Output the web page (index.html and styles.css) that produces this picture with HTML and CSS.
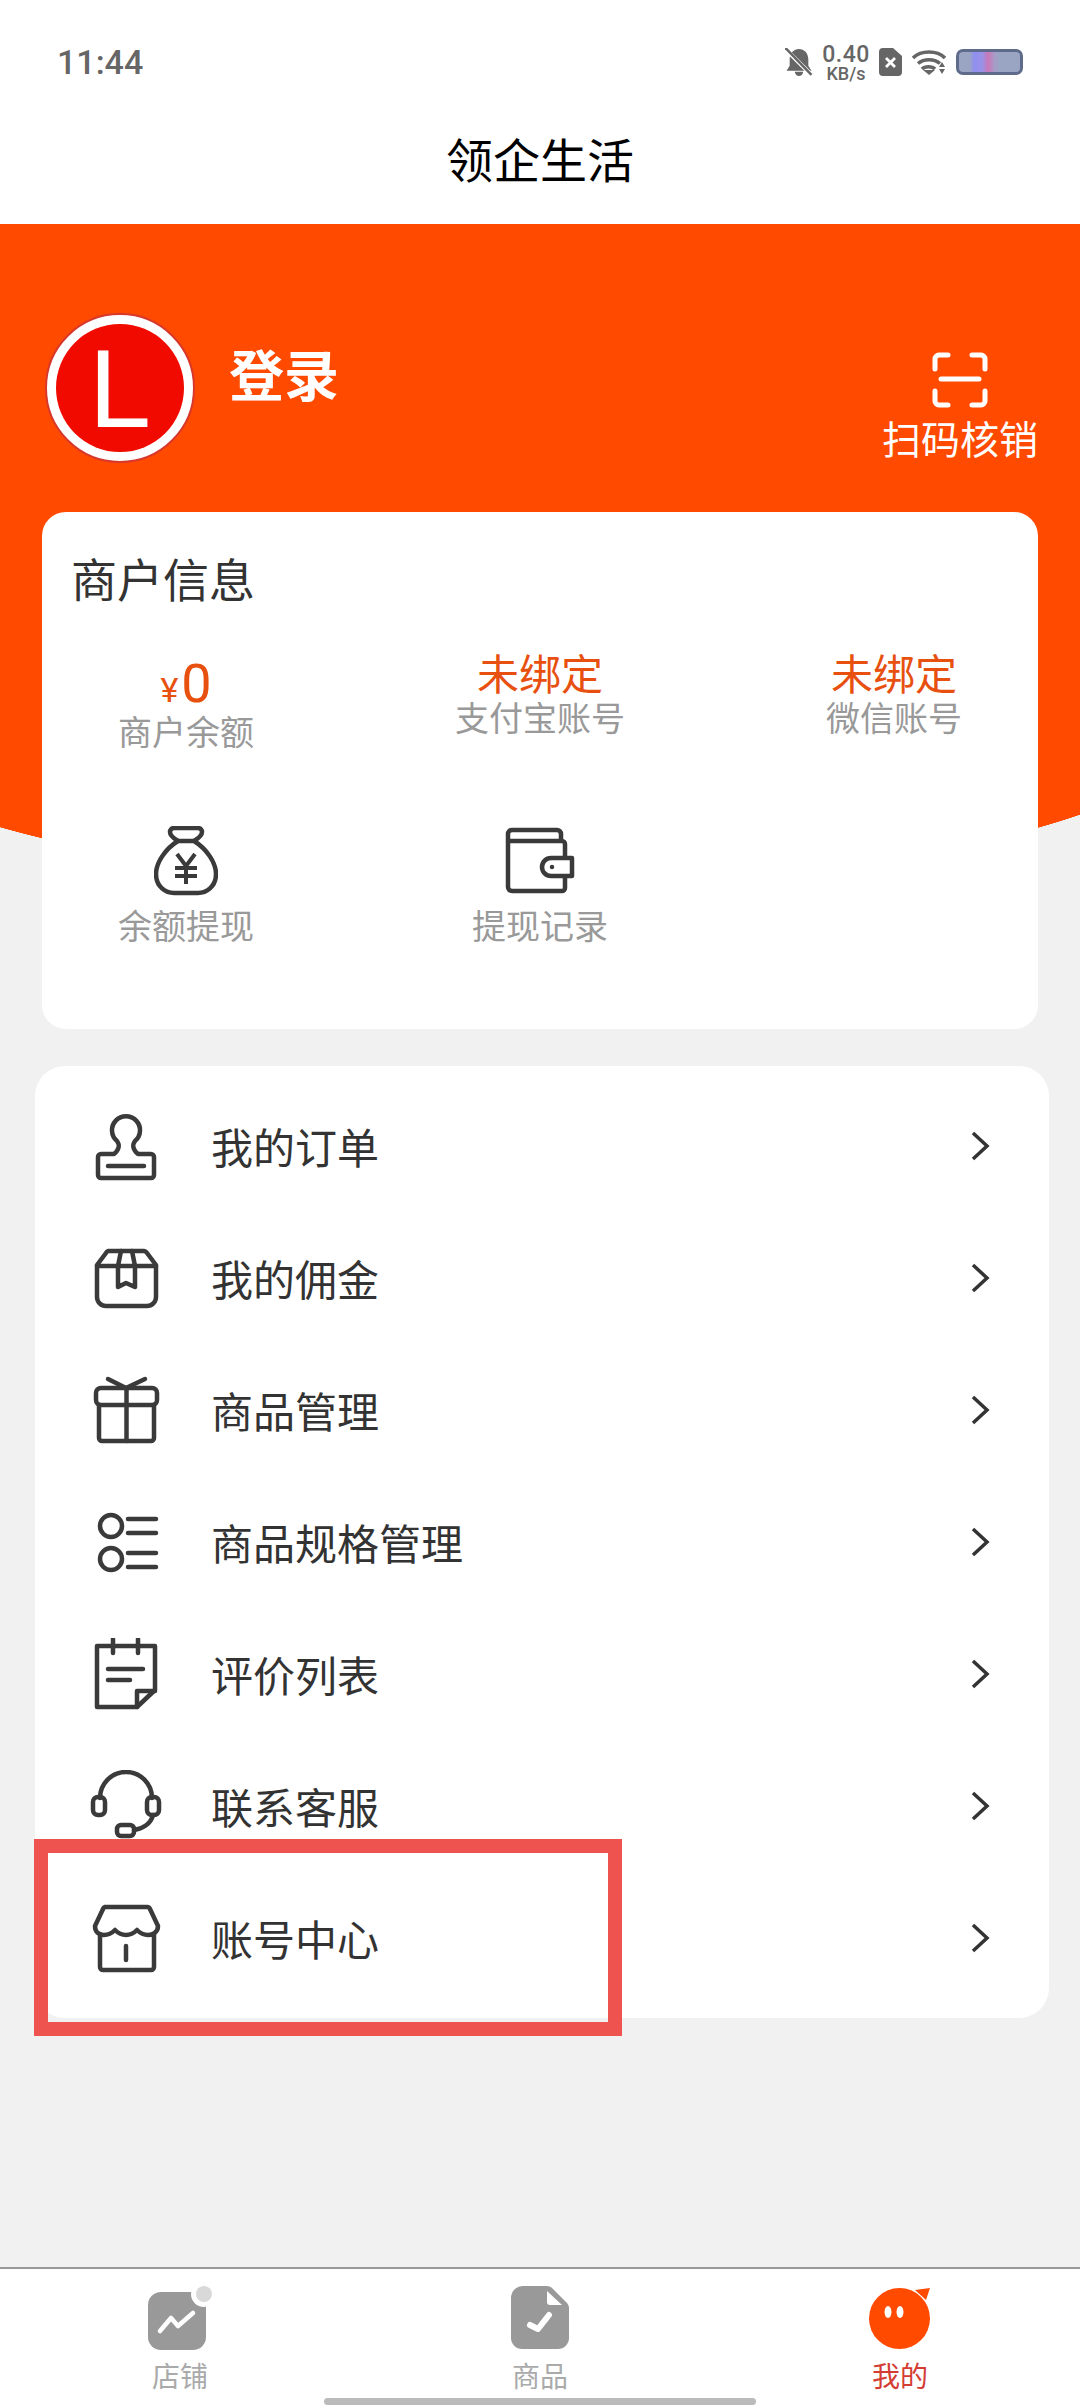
FILE: index.html
```html
<!DOCTYPE html>
<html lang="zh-CN">
<head>
    <meta charset="UTF-8">
    <meta name="viewport" content="width=device-width, initial-scale=1.0">
    <title>领企生活</title>
    <link rel="stylesheet" href="styles.css">
</head>
<body>
    <header class="top">
        <div class="status-bar">
            <span class="time">11:44</span>
            <div class="status-icons">
                <svg class="ic-bell" viewBox="0 0 26 27"><path d="M13 1c5 0 9 4 9 10v6l3 5H1l3-5v-6c0-6 4-10 9-10zM9 23h8a4 4 0 0 1-8 0z" fill="#666"/><path d="M0 1l26 26" stroke="#fff" stroke-width="4"/><path d="M0 0l25 26" stroke="#666" stroke-width="2.4"/></svg>
                <div class="speed"><span class="speed-num">0.40</span><span class="speed-unit">KB/s</span></div>
                <svg class="ic-sim" viewBox="0 0 23 28"><path d="M4 0h10l9 8v16a4 4 0 0 1-4 4H4a4 4 0 0 1-4-4V4a4 4 0 0 1 4-4z" fill="#666"/><path d="M7 10l9 9M16 10l-9 9" stroke="#fff" stroke-width="2.8"/></svg>
                <svg class="ic-wifi" viewBox="0 0 34 26" fill="none" stroke="#666" stroke-width="3.500"><path d="M1 9c8-8 24-8 32 0"/><path d="M6 14.500c6-5 16-5 22 0"/><path d="M10 20c3-3 10-3 13 0" /><path d="M11 21l6 5 6-5z" fill="#666" stroke="none"/><path d="M30 13l-3 5h6zM27 20h6l-3 5z" fill="#666" stroke="none"/></svg>
                <div class="battery"></div>
            </div>
        </div>
        <h1 class="page-title">领企生活</h1>
    </header>

    <main class="page">
        <section class="hero">
            <div class="user-row">
                <div class="avatar"><span class="avatar-in">L</span></div>
                <div class="login-name">登录</div>
                <div class="scan">
                    <svg class="ic-scan" viewBox="0 0 56 56" fill="none" stroke="#fff" stroke-width="5" stroke-linecap="round"><path d="M3 17V7a4 4 0 0 1 4-4h9"/><path d="M40 3h9a4 4 0 0 1 4 4v10"/><path d="M3 39v10a4 4 0 0 0 4 4h9"/><path d="M40 53h9a4 4 0 0 0 4-4V39"/><path d="M9 27h38"/></svg>
                    <span>扫码核销</span>
                </div>
            </div>

            <div class="merchant-card">
                <h2 class="card-title">商户信息</h2>
                <div class="stats">
                    <div class="stat">
                        <div class="amount"><small>¥</small>0</div>
                        <div class="stat-label amount-label">商户余额</div>
                    </div>
                    <div class="stat">
                        <div class="stat-value">未绑定</div>
                        <div class="stat-label">支付宝账号</div>
                    </div>
                    <div class="stat">
                        <div class="stat-value">未绑定</div>
                        <div class="stat-label">微信账号</div>
                    </div>
                    <div class="stat">
                        <svg class="ic-bag" viewBox="0 0 64 70" fill="none" stroke="#3a3a3a" stroke-width="4.5" stroke-linejoin="round"><path d="M24 15c-5-3-8-6-8-9a4 4 0 0 1 4-4h24a4 4 0 0 1 4 4c0 3-3 6-8 9"/><path d="M24 15C11 23 2 37 2 48c0 13 10 19 18 19h24c8 0 18-6 18-19 0-11-9-25-22-33z"/><path d="M23 28l9 12 9-12M21 42h22M21 50h22M32 40v18" stroke-width="4"/></svg>
                        <div class="stat-label action-label">余额提现</div>
                    </div>
                    <div class="stat">
                        <svg class="ic-wallet" viewBox="0 0 70 66" fill="none" stroke="#3a3a3a" stroke-width="4.5" stroke-linejoin="round"><path d="M56 13V6a4 4 0 0 0-4-4H7a4 4 0 0 0-4 4v53a4 4 0 0 0 4 4h50a3 3 0 0 0 3-3V48"/><path d="M60 30V16a3 3 0 0 0-3-3H3"/><path d="M67 30H46a9 9 0 0 0 0 18h21z"/><circle cx="47" cy="39" r="1.5" fill="#3a3a3a" stroke-width="1.5"/></svg>
                        <div class="stat-label action-label">提现记录</div>
                    </div>
                </div>
            </div>
        </section>

        <section class="menu-card">
            <ul class="menu">
                <li class="menu-row">
                    <svg class="menu-ic" viewBox="0 0 72 72"><path d="M27 31a14 14 0 1 1 18 0c-3 4-2 9 3 13h13a3 3 0 0 1 3 3v18a3 3 0 0 1-3 3H11a3 3 0 0 1-3-3V47a3 3 0 0 1 3-3h13c5-4 6-9 3-13z"/><path d="M18 56h36"/></svg>
                    <span class="menu-text">我的订单</span>
                    <svg class="chevron" viewBox="0 0 20 30"><path d="M3 2l14 13L3 28"/></svg>
                </li>
                <li class="menu-row">
                    <svg class="menu-ic" viewBox="0 0 72 72"><path d="M18 9h36a4 4 0 0 1 3 2l9 12v32a9 9 0 0 1-9 9H16a9 9 0 0 1-9-9V23l9-12a4 4 0 0 1 2-2z"/><path d="M7 24h59"/><path d="M31 9l-3 15v21l8-4 9 4V24l-3-15"/></svg>
                    <span class="menu-text">我的佣金</span>
                    <svg class="chevron" viewBox="0 0 20 30"><path d="M3 2l14 13L3 28"/></svg>
                </li>
                <li class="menu-row">
                    <svg class="menu-ic" viewBox="0 0 72 72"><path d="M11 14h51a5 5 0 0 1 5 5v7a5 5 0 0 1-5 5H11a5 5 0 0 1-5-5v-7a5 5 0 0 1 5-5z"/><path d="M9 31v33a3 3 0 0 0 3 3h49a3 3 0 0 0 3-3V31"/><path d="M36.500 14v53"/><path d="M18 5l18 9 19-9"/></svg>
                    <span class="menu-text">商品管理</span>
                    <svg class="chevron" viewBox="0 0 20 30"><path d="M3 2l14 13L3 28"/></svg>
                </li>
                <li class="menu-row">
                    <svg class="menu-ic" viewBox="0 0 72 72"><circle cx="21" cy="20" r="11"/><circle cx="21" cy="53" r="11"/><path d="M38 13h28M38 27h28M38 47h28M38 61h28"/></svg>
                    <span class="menu-text">商品规格管理</span>
                    <svg class="chevron" viewBox="0 0 20 30"><path d="M3 2l14 13L3 28"/></svg>
                </li>
                <li class="menu-row">
                    <svg class="menu-ic" viewBox="0 0 72 72"><path d="M7 8h58v44L47 69H7z"/><path d="M47 69V53h18"/><path d="M23 1v14M48 1v14M18 31h35M18 42h22"/></svg>
                    <span class="menu-text">评价列表</span>
                    <svg class="chevron" viewBox="0 0 20 30"><path d="M3 2l14 13L3 28"/></svg>
                </li>
                <li class="menu-row">
                    <svg class="menu-ic" viewBox="0 0 72 72"><path d="M10 28a26 26 0 0 1 52 0"/><rect x="3" y="27" width="12" height="18" rx="5"/><rect x="57" y="27" width="12" height="18" rx="5"/><path d="M63 45c-2 9-11 14-19 15"/><rect x="27" y="55" width="17" height="11" rx="4"/></svg>
                    <span class="menu-text">联系客服</span>
                    <svg class="chevron" viewBox="0 0 20 30"><path d="M3 2l14 13L3 28"/></svg>
                </li>
                <li class="menu-row">
                    <svg class="menu-ic" viewBox="0 0 72 72"><path d="M15 5h42a3 3 0 0 1 3 2l8 17c0 6-5 9-10 9s-8-2-11-5c-3 3-6 5-11 5s-8-2-11-5c-3 3-6 5-11 5-5 0-9-3-9-9l8-17a3 3 0 0 1 2-2z"/><path d="M10 32v33a3 3 0 0 0 3 3h48a3 3 0 0 0 3-3V32"/><path d="M36 44v14"/></svg>
                    <span class="menu-text">账号中心</span>
                    <svg class="chevron" viewBox="0 0 20 30"><path d="M3 2l14 13L3 28"/></svg>
                </li>
            </ul>
            <div class="highlight"></div>
        </section>
    </main>

    <nav class="tabbar">
        <div class="tab">
            <svg class="tab-ic" viewBox="0 0 64 64"><rect x="0" y="6" width="58" height="58" rx="13" fill="#999"/><circle cx="56" cy="8" r="13" fill="#fff"/><circle cx="56" cy="8" r="8" fill="#d9d9d9"/><path d="M12 45l11-13 7 8 15-13" fill="none" stroke="#fff" stroke-width="4.500" stroke-linecap="round" stroke-linejoin="round"/></svg>
            <span>店铺</span>
        </div>
        <div class="tab">
            <svg class="tab-ic" viewBox="0 0 58 64"><path d="M12 0h24c2 0 4 1 5 2l15 15c1 1 2 3 2 5v30a11 11 0 0 1-11 11H11A11 11 0 0 1 0 52V12A12 12 0 0 1 12 0z" fill="#999"/><path d="M36 5v11a3 3 0 0 0 3 3h12z" fill="#fff"/><path d="M19 39l8 4 11-14" fill="none" stroke="#fff" stroke-width="6" stroke-linecap="round" stroke-linejoin="round"/></svg>
            <span>商品</span>
        </div>
        <div class="tab tab-on">
            <svg class="tab-ic" viewBox="0 0 62 64"><ellipse cx="30.500" cy="32.500" rx="30.500" ry="30.500" fill="#ff4a00"/><path d="M46 4l15-2-4 12z" fill="#ff4a00"/><ellipse cx="19" cy="26" rx="3.500" ry="6" fill="#fff"/><ellipse cx="31" cy="26" rx="3.500" ry="6" fill="#fff"/></svg>
            <span>我的</span>
        </div>
        <div class="home-bar"></div>
    </nav>
</body>
</html>
```

FILE: styles.css
```css
* {
    box-sizing: border-box;
}

html, body {
    margin: 0;
    padding: 0;
}

body {
    width: 1080px;
    height: 2408px;
    display: flex;
    flex-direction: column;
    overflow: hidden;
    font-family: Roboto, "Noto Sans CJK SC", sans-serif;
    background-color: #f1f1f2;
    color: #333;
}

/* status bar and title */
.top {
    height: 224px;
    background-color: #fff;
}

.status-bar {
    height: 124px;
    padding: 0 57px;
    display: flex;
    justify-content: space-between;
    align-items: center;
}

.time {
    font-size: 34px;
    font-weight: 500;
    color: #666;
}

.status-icons {
    display: flex;
    align-items: center;
    gap: 10px;
}

.ic-bell {
    width: 28px;
    height: 28px;
}

.speed {
    width: 46px;
    padding-top: 2px;
    display: flex;
    flex-direction: column;
    align-items: center;
    color: #666;
    font-family: Roboto, sans-serif;
    font-weight: 500;
}

.speed-num {
    font-size: 23px;
    line-height: 20px;
    letter-spacing: 0.5px;
}

.speed-unit {
    font-size: 18px;
    line-height: 17px;
}

.ic-sim {
    width: 23px;
    height: 28px;
}

.ic-wifi {
    width: 34px;
    height: 26px;
}

.battery {
    width: 67px;
    height: 26px;
    border: 3px solid #5f6b8a;
    border-radius: 7px;
    background: linear-gradient(90deg, #9aa5c4 0, #9aa5c4 18%, #8f8ff0 25%, #9a92e8 38%, #c878b8 48%, #a79cc8 58%, #9aa5c4 66%);
}

.page-title {
    margin: 0;
    height: 76px;
    line-height: 76px;
    text-align: center;
    font-size: 47px;
    font-weight: 400;
    color: #000;
}

/* orange block */
.hero {
    position: relative;
    padding: 89px 42px 0 45px;
}

.hero::before {
    content: "";
    position: absolute;
    top: 0;
    left: 0;
    width: 100%;
    height: 663px;
    background:
        radial-gradient(700px 180px at 520px 483px, #ff4a00 99.8%, transparent 100%),
        linear-gradient(#ff4a00, #ff4a00) top / 100% 483px no-repeat;
}

.user-row {
    position: relative;
    display: flex;
    align-items: flex-start;
    color: #fff;
}

.avatar {
    width: 150px;
    height: 150px;
    padding: 9px;
    border-radius: 50%;
    border: 2px solid #d8382c;
    background-color: #fff;
}

.avatar-in {
    display: block;
    width: 100%;
    height: 100%;
    border-radius: 50%;
    background-color: #f00a00;
    color: #fff;
    text-align: center;
    font-family: "Liberation Sans", sans-serif;
    font-size: 112px;
    line-height: 130px;
}

.login-name {
    margin: 28px 0 0 34px;
    font-size: 55px;
    line-height: 72px;
    font-weight: 700;
}

.scan {
    margin: 39px 0 0 auto;
    display: flex;
    flex-direction: column;
    align-items: center;
    font-size: 39px;
    line-height: 46px;
}

.ic-scan {
    width: 56px;
    height: 56px;
    margin-bottom: 10px;
}

.merchant-card {
    position: relative;
    height: 517px;
    margin: 48px 0 0 -3px;
    padding: 46px 0 0 29px;
    background-color: #fff;
    border-radius: 24px;
}

.card-title {
    margin: 0;
    font-size: 46px;
    line-height: 46px;
    font-weight: 400;
    color: #333;
}

.stats {
    margin: 51px 0 0 -29px;
    display: grid;
    grid-template-columns: repeat(3, 354px);
    justify-content: center;
    row-gap: 76px;
}

.stat {
    display: flex;
    flex-direction: column;
    align-items: center;
}

.stat-value {
    font-size: 42px;
    line-height: 42px;
    color: #e8500f;
}

.amount {
    font-size: 54px;
    line-height: 58px;
    color: #e8500f;
}

.amount small {
    font-size: 34px;
    margin-right: 3px;
}

.stat-label {
    margin-top: 6px;
    font-size: 34px;
    line-height: 33px;
    color: #999;
}

.amount-label {
    margin-top: -2px;
}

.action-label {
    margin-top: 15px;
}

.ic-bag {
    width: 64px;
    height: 70px;
}

.ic-wallet {
    width: 70px;
    height: 70px;
}

/* menu list */
.menu-card {
    position: relative;
    height: 952px;
    margin: 37px 31px 0 35px;
    padding: 14px 0 12px;
    background-color: #fff;
    border-radius: 30px;
}

.menu {
    list-style: none;
    margin: 0;
    padding: 0;
}

.menu-row {
    height: 132px;
    padding: 0 59px 0 55px;
    display: flex;
    align-items: center;
}

.menu-ic {
    width: 72px;
    height: 72px;
    fill: none;
    stroke: #3a3a3a;
    stroke-width: 4.5;
    stroke-linejoin: round;
    stroke-linecap: round;
}

.menu-text {
    margin: 0 0 2px 49px;
    font-size: 42px;
    color: #333;
}

.chevron {
    width: 20px;
    height: 30px;
    margin-left: auto;
    fill: none;
    stroke: #333;
    stroke-width: 3.5;
}

.highlight {
    position: absolute;
    left: -1px;
    top: 773px;
    width: 588px;
    height: 197px;
    border: 14px solid #ee5350;
}

/* bottom tabs */
.tabbar {
    position: relative;
    height: 141px;
    margin-top: auto;
    display: grid;
    grid-template-columns: repeat(3, 360px);
    padding-top: 17px;
    background-color: #fff;
    border-top: 2px solid #999;
}

.tab {
    display: flex;
    flex-direction: column;
    align-items: center;
    font-size: 28px;
    line-height: 28px;
    color: #aaa;
}

.tab-ic {
    height: 64px;
    margin-bottom: 14px;
}

.tab-on {
    color: #d43c33;
}

.home-bar {
    position: absolute;
    left: 324px;
    bottom: 3px;
    width: 432px;
    height: 7px;
    border-radius: 4px;
    background-color: #bbb;
}
```
